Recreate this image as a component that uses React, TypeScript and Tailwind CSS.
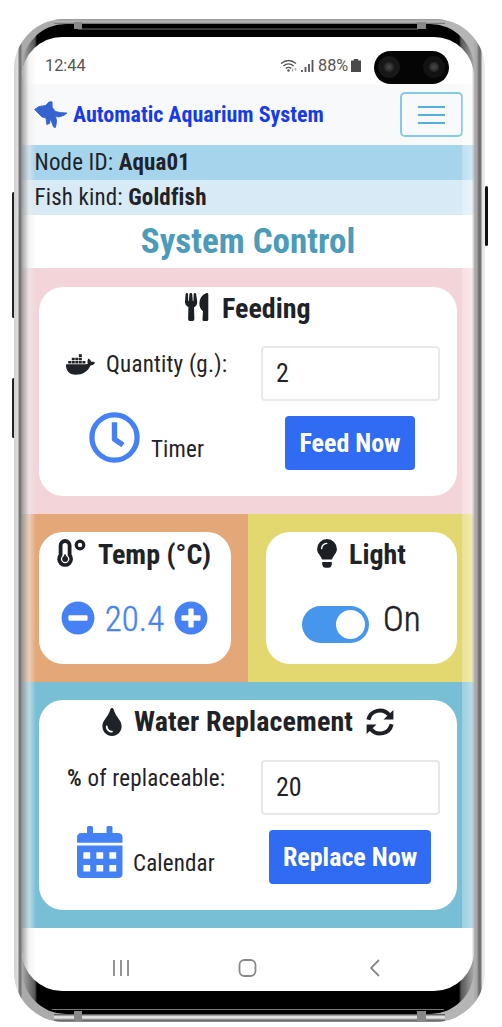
import type { ReactNode } from "react";
import { FaDocker, FaTint, FaMinusCircle, FaPlusCircle } from "react-icons/fa";

const INK = "#1c1f24";

function Fish() {
  return (
    <svg className="h-[28px] w-[34px]" viewBox="0 0 34 28" fill="#3563d0">
      <path d="M0.5 8.5 L5 5.5 L11.5 4.5 L15 1 L18 0.7 L18.3 6.5 L21.5 10.5 L26 11.5 L33 12 L30 14.3 L25 16 L21.5 15.5 L22.7 20 L21.5 26.5 L19.5 26 L16.5 18 L15.5 22.5 L12.8 23.5 L12 17 L8 16 L5 13 Z" strokeLinejoin="round" stroke="#3563d0" strokeWidth="0.8" />
    </svg>
  );
}

function Utensils() {
  return (
    <svg className="h-[28px] w-[24px]" viewBox="0 0 24 28" fill={INK}>
      <path d="M0.6 1 Q0.8 0 1.9 0 Q3 0 3 1 L3.3 8 h0.6 L4.4 1 Q4.5 0 5.8 0 Q7.1 0 7.2 1 L7.8 8 h0.6 L8.7 1 Q8.8 0 9.9 0 Q11 0 11.1 1 L12.2 8.5 Q12.4 12.5 9 14.3 L9.4 26 Q9.3 28 7.8 28 H4.6 Q3.2 28 3.1 26 L3.4 14.3 Q-0.3 12.5 0 8.5 Z" />
      <path d="M23.3 1.4 V26.4 Q23.3 28 21.7 28 H19 Q17.4 28 17.5 26.2 L18 18.2 Q14.3 15.5 14.4 10.5 Q14.6 2.5 21.7 0 Q23.3 -0.2 23.3 1.4 Z" />
    </svg>
  );
}

function Clock() {
  return (
    <svg className="size-[51px]" viewBox="0 0 51 51" fill="none" stroke="#4381f5">
      <circle cx="25.5" cy="25.5" r="22.6" strokeWidth="5.2" />
      <path d="M25.5 10.2 V27.3 L34 33" strokeWidth="5.4" strokeLinejoin="round" />
    </svg>
  );
}

function Thermometer() {
  return (
    <svg className="h-[29px] w-[30px]" viewBox="0 0 30 29" fill="none" stroke={INK}>
      <path d="M4.6 16 V6.5 a4.5 4.5 0 0 1 9 0 V16 a6 6 0 1 1 -9 0 Z" strokeWidth="3.8" strokeLinejoin="round" />
      <circle cx="9.1" cy="20" r="2.9" fill={INK} stroke="none" />
      <path d="M9.1 15.5 v4" strokeWidth="2" />
      <circle cx="24" cy="6" r="3.8" strokeWidth="3.2" />
    </svg>
  );
}

function Bulb() {
  return (
    <svg className="h-[29px] w-[20px]" viewBox="0 0 20 29" fill={INK}>
      <path d="M10 0 A9.9 9.9 0 0 1 19.9 9.9 C19.9 14.5 16.2 16 15 20.5 H5 C3.8 16 .1 14.5 .1 9.9 A9.9 9.9 0 0 1 10 0 Z" />
      <path d="M5.2 23 H14.8 V25.2 Q14.2 28.7 11.5 28.7 H8.5 Q5.8 28.7 5.2 25.2 Z" />
      <path d="M4.6 9.6 Q5 5 9.8 4.4" fill="none" stroke="#fff" strokeWidth="1.4" strokeLinecap="round" />
    </svg>
  );
}

function Sync() {
  return (
    <svg className="ml-[13px] size-[28px]" viewBox="0 0 28 28" fill="none" stroke={INK} strokeWidth="4">
      <path d="M2.4 11.8 A11.8 11.8 0 0 1 23 6.8 M25.6 16.2 A11.8 11.8 0 0 1 5 21.2" />
      <path d="M27.4 2 V11.6 H17.5 Z M0.6 26 V16.4 H10.5 Z" fill={INK} stroke="none" />
    </svg>
  );
}

function Calendar() {
  return (
    <svg className="h-[52px] w-[46px]" viewBox="0 0 46 52" fill="#4381f5">
      <path d="M10 1.5 Q10 0 11.5 0 H14.5 Q16 0 16 1.5 V7 H29.5 V1.5 Q29.5 0 31 0 H34 Q35.5 0 35.5 1.5 V7 H41 Q45.5 7 45.5 11.5 V16.8 H0 V11.5 Q0 7 4.5 7 H10 Z" />
      <path fillRule="evenodd" d="M0 19.5 H45.5 V47.5 Q45.5 52 41 52 H4.5 Q0 52 0 47.5 Z M6.4 26.2 v6.6 h6.8 v-6.6 Z M19.4 26.2 v6.6 h6.8 v-6.6 Z M32.4 26.2 v6.6 h6.8 v-6.6 Z M6.4 39 v6.6 h6.8 v-6.6 Z M19.4 39 v6.6 h6.8 v-6.6 Z M32.4 39 v6.6 h6.8 v-6.6 Z" />
    </svg>
  );
}

function Card({ className, children }: { className: string; children: ReactNode }) {
  return <section className={"rounded-[24px] bg-white " + className}>{children}</section>;
}

function Camera({ className }: { className: string }) {
  return (
    <span className={"flex size-[22px] items-center justify-center rounded-full " + className}>
      <span className="size-[10px] rounded-full bg-[radial-gradient(circle,#4a4a4a,#161616)]" />
    </span>
  );
}

export default function App() {
  return (
    <main className="relative h-[1027px] w-[502px] overflow-hidden bg-white pt-[19px] pl-[14px] font-['Roboto_Condensed','Roboto',sans-serif] leading-none text-[#1f2226] [font-stretch:75%]">
      <div className="absolute top-[192px] left-[12px] h-[126px] w-[3px] rounded bg-[#222]" />
      <div className="absolute top-[378px] left-[12px] h-[60px] w-[3px] rounded bg-[#222]" />
      <div className="absolute top-[186px] left-[485px] h-[60px] w-[3px] rounded bg-[#111]" />

      <div className="relative h-[1003px] w-[471px] overflow-hidden rounded-[50px] bg-[linear-gradient(90deg,#cfcfcf_0px,#dedede_4px,#777_5px,#777_7px,#aaa_8px,#b5b5b5_459px,#a5a5a5_463px,#6f6a6c_465px,#777_467px,#e4e4e4_468px,#eee_471px)] pt-[5px] pr-[11px] pl-[8px]">
        <div className="absolute inset-x-[40px] top-0 h-[5px] bg-[linear-gradient(#999,#bbb_60%,#666)]" />
        <div className="absolute inset-x-[40px] bottom-0 h-[8px] bg-[linear-gradient(#444,#eee_35%,#ddd_50%,#666_80%,#999)]" />
        <div className="relative flex h-[990px] flex-col rounded-[44px] bg-[linear-gradient(90deg,#aaa,#555_13px,#000_15px,#000_437px,#555_439px,#aaa)] pt-[13px]">
          <div className="absolute inset-x-[56px] top-[4px] h-[2px] bg-[#3a3a3a]" />
          <div className="absolute inset-x-[30px] bottom-[4px] h-[1px] bg-[#777]" />
          <div className="relative flex h-[954px] w-[452px] flex-col overflow-hidden rounded-[40px] bg-white">
            <header className="flex h-[47px] shrink-0 items-center pt-[10px] pl-[23px] font-['Roboto',sans-serif] text-[16.3px] text-[#555] [font-stretch:100%]">
              <span className="mt-[2px] w-[235px]">12:44</span>
              <svg className="h-[14px] w-[36px]" viewBox="0 0 36 14" fill="none" stroke="#555" strokeWidth="1.4">
                <path d="M1 4.5 Q8.5 -1.5 16 4.5 M3.4 7 Q8.5 2.8 13.6 7 M5.8 9.4 Q8.5 7.4 11.2 9.4" />
                <circle cx="8.5" cy="11.5" r="1.2" fill="#555" stroke="none" />
                <path d="M12.5 9.5 v3 M15.5 9 v2.5" stroke="#aaa" />
                <path d="M22 13 v-2 M25.5 13 v-5 M29 13 v-8 M32.5 13 v-12" strokeWidth="1.8" />
              </svg>
              <span className="mt-[2px] ml-[2px] w-[33px]">88%</span>
              <svg className="h-[13px] w-[10px]" viewBox="0 0 9 13" preserveAspectRatio="none" fill="#4a4a4a"><path d="M2.5 0h4v1.5h2.5V13H0V1.5h2.5z" /></svg>
              <span className="mt-[3px] ml-[13px] flex h-[33px] w-[75px] items-center justify-between rounded-full bg-[#050505] px-[4px]">
                <Camera className="bg-[#181818]" />
                <Camera className="bg-[#121212]" />
              </span>
            </header>

            <nav className="flex h-[61px] shrink-0 items-center bg-[#f8f9fb] pl-[12px]">
              <Fish />
              <h1 className="ml-[5px] w-[327px] text-[22px] font-bold whitespace-nowrap text-[#163bea]">Automatic Aquarium System</h1>
              <button className="flex h-[45px] w-[63px] shrink-0 flex-col items-center justify-center gap-[6px] rounded-[5px] border-2 border-[#86c9e6]" aria-label="Menu">
                <span className="h-[2px] w-[27px] bg-[#55ade0]" />
                <span className="h-[2px] w-[27px] bg-[#55ade0]" />
                <span className="h-[2px] w-[27px] bg-[#55ade0]" />
              </button>
            </nav>

            <p className="flex h-[35px] shrink-0 items-center bg-[#a5d4ec] pl-[12.5px] text-[23px] tracking-[0.15px] whitespace-pre">Node ID: <b>Aqua01</b></p>
            <p className="flex h-[35px] shrink-0 items-center bg-[#d8eaf5] pl-[12.5px] text-[23px] tracking-[0.15px] whitespace-pre">Fish kind: <b>Goldfish</b></p>
            <h2 className="flex h-[53px] shrink-0 items-center justify-center text-[35px] font-bold text-[#4b9bb9]">System Control</h2>

            <div className="h-[246px] shrink-0 bg-[#f3d4d9] pt-[19px] pl-[17px]">
              <Card className="h-[209px] w-[418px]">
                <h3 className="flex h-[43px] items-center pl-[146px] text-[28px] font-bold">
                  <span className="-mt-[3px]"><Utensils /></span><span className="ml-[13px]">Feeding</span>
                </h3>
                <div className="flex h-[86px] items-center pl-[27px] text-[23px]">
                  <FaDocker className="-mt-[18px] size-[29px]" />
                  <label className="-mt-[18px] ml-[11px] w-[155px] tracking-[0.23px]">Quantity (g.):</label>
                  <div className="flex h-[55px] w-[179px] items-center rounded-[4px] border-2 border-[#e7e9ee] pl-[13px] text-[26px]">2</div>
                </div>
                <div className="flex h-[54px] items-center pl-[50px] text-[23px]">
                  <span className="-mt-[11px]"><Clock /></span>
                  <span className="mt-[12px] ml-[11px] w-[134px] tracking-[0.15px]">Timer</span>
                  <button className="h-[54px] w-[130px] rounded-[4px] bg-[#306bf3] text-[26px] font-bold text-white">Feed Now</button>
                </div>
              </Card>
            </div>

            <div className="flex h-[168px] shrink-0">
              <div className="w-[226px] bg-[#e4a777] pt-[18px] pl-[17px]">
                <Card className="h-[132px] w-[192px]">
                  <h3 className="flex h-[43px] items-center pl-[17px] text-[28px] font-bold whitespace-nowrap"><Thermometer /><span className="mt-[2px] ml-[12px]">Temp (°C)</span></h3>
                  <div className="flex h-[86px] items-center pl-[22px] text-[#4682f5]">
                    <FaMinusCircle className="size-[34px]" />
                    <span className="mt-[2px] w-[79px] text-center text-[35px] font-light [-webkit-text-stroke:0.4px_#4682f5]">20.4</span>
                    <FaPlusCircle className="size-[34px]" />
                  </div>
                </Card>
              </div>
              <div className="flex-1 bg-[#e3d86f] pt-[18px] pl-[18px]">
                <Card className="h-[132px] w-[191px]">
                  <h3 className="flex h-[43px] items-center pl-[51px] text-[28px] font-bold"><Bulb /><span className="mt-[2px] ml-[12px]">Light</span></h3>
                  <div className="flex h-[86px] items-center pl-[36px]">
                    <span className="mt-[12px] flex h-[37px] w-[67px] items-center justify-end rounded-full bg-[#4796ed] pr-[4px]">
                      <span className="size-[29px] rounded-full bg-white" />
                    </span>
                    <span className="mt-[2px] ml-[14px] text-[35px] font-light [-webkit-text-stroke:0.5px_#1f2226]">On</span>
                  </div>
                </Card>
              </div>
            </div>

            <div className="h-[246px] shrink-0 bg-[#78bfd6] pt-[18px] pl-[17px]">
              <Card className="h-[210px] w-[418px]">
                <h3 className="flex h-[43px] items-center pl-[59px] text-[28px] font-bold whitespace-nowrap">
                  <FaTint className="mr-[8px] size-[28px]" /><span className="tracking-[0.1px]">Water Replacement</span><Sync />
                </h3>
                <div className="flex h-[88px] items-center pl-[28px] text-[23px]">
                  <label className="-mt-[18px] w-[194px] tracking-[0.23px]"><span className="font-semibold">%</span> of replaceable:</label>
                  <div className="flex h-[55px] w-[179px] items-center rounded-[4px] border-2 border-[#e7e7e9] pl-[13px] text-[26px]">20</div>
                </div>
                <div className="flex h-[52px] items-center pl-[38px] text-[23px]">
                  <span className="-mt-[10px]"><Calendar /></span>
                  <span className="mt-[12px] ml-[10px] w-[136px] tracking-[0.15px]">Calendar</span>
                  <button className="h-[54px] w-[162px] rounded-[4px] bg-[#306bf3] text-[26px] font-bold text-white">Replace Now</button>
                </div>
              </Card>
            </div>

            <footer className="flex h-[63px] shrink-0 items-center pt-[16px] pl-[90px]">
              <svg className="h-[18px] w-[272px]" viewBox="0 0 272 18" fill="none" stroke="#888" strokeWidth="1.8">
                <path d="M2 1 v16 M9 1 v16 M16 1 v16 M267 1 L259 9 L267 17" />
                <rect x="127.5" y="1" width="16" height="16" rx="5" />
              </svg>
            </footer>
            <div className="pointer-events-none absolute inset-y-0 left-0 w-[14px] bg-[linear-gradient(90deg,rgba(150,150,150,.85),rgba(235,235,235,.6)_50%,rgba(255,255,255,0))]" />
            <div className="pointer-events-none absolute inset-y-0 right-0 w-[12px] bg-[linear-gradient(90deg,rgba(255,255,255,.25),rgba(255,255,255,.45)_80%,rgba(190,190,190,.8))]" />
          </div>
        </div>
        <div className="absolute top-[3px] left-[60px] h-[7px] w-[8px] bg-[#888]" />
        <div className="absolute top-[3px] right-[59px] h-[7px] w-[9px] bg-[#888]" />
        <div className="absolute bottom-[1px] left-[60px] h-[10px] w-[8px] bg-[#888]" />
        <div className="absolute right-[59px] bottom-[1px] h-[10px] w-[9px] bg-[#888]" />
      </div>
    </main>
  );
}
